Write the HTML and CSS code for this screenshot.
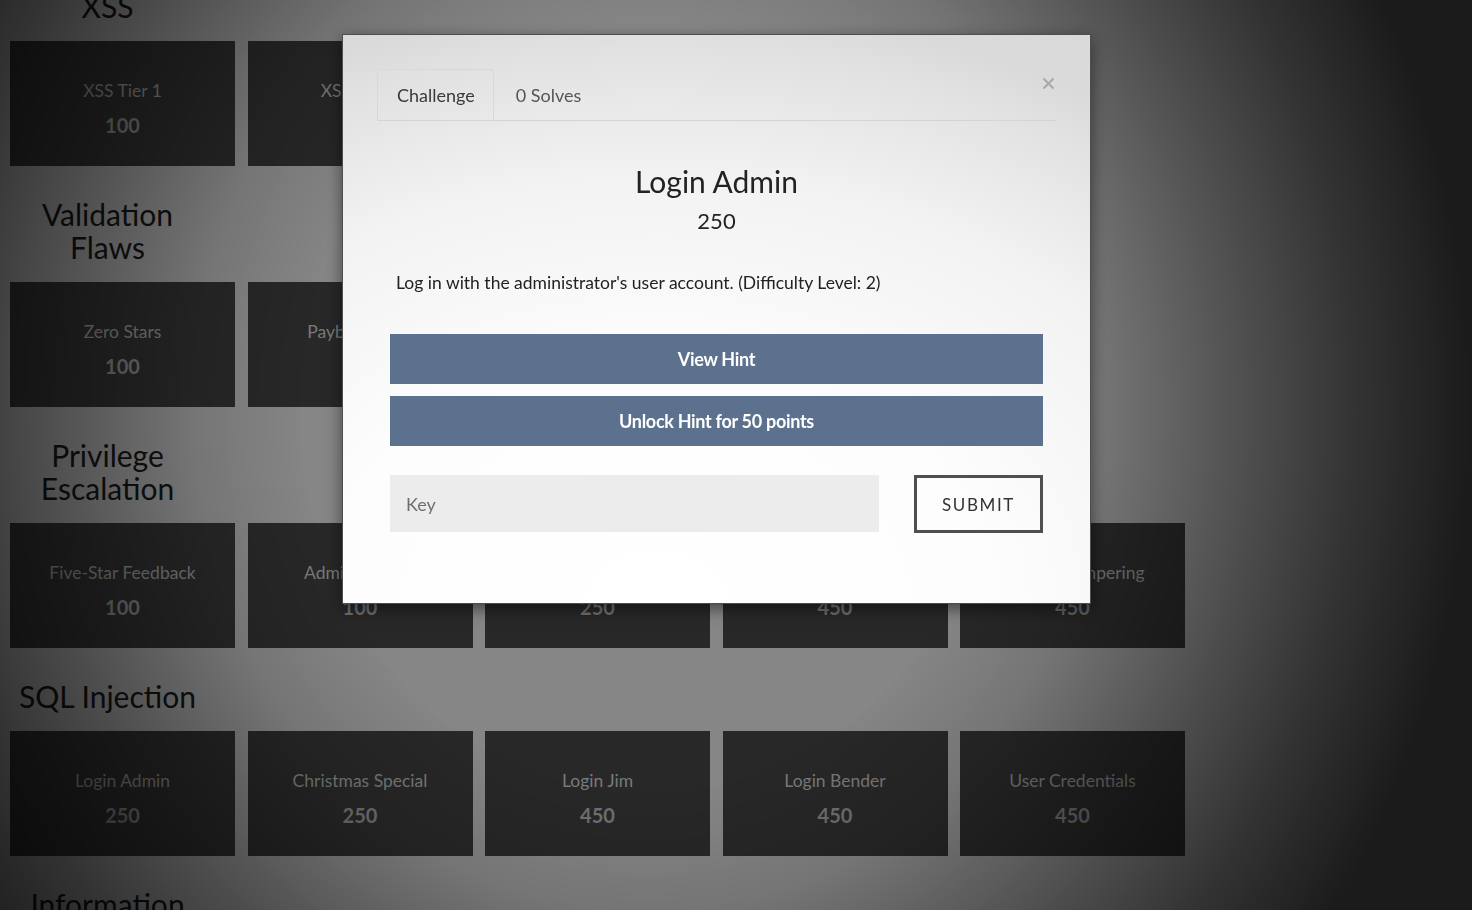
FILE: index.html
```html
<!DOCTYPE html>
<html lang="en">
<head>
<meta charset="utf-8">
<title>Challenges</title>
<link rel="stylesheet" href="styles.css">
</head>
<body>
<main class="board">
  <section class="category">
    <h2 class="cat-title">XSS</h2>
    <div class="tiles">
      <div class="tile"><span class="tile-name">XSS Tier 1</span><span class="tile-pts">100</span></div>
      <div class="tile"><span class="tile-name">XSS Tier 2</span><span class="tile-pts">250</span></div>
      <div class="tile"><span class="tile-name">XSS Tier 3</span><span class="tile-pts">450</span></div>
      <div class="tile"><span class="tile-name">XSS Tier 4</span><span class="tile-pts">450</span></div>
    </div>
  </section>
  <section class="category">
    <h2 class="cat-title">Validation Flaws</h2>
    <div class="tiles">
      <div class="tile"><span class="tile-name">Zero Stars</span><span class="tile-pts">100</span></div>
      <div class="tile"><span class="tile-name">Payback Time</span><span class="tile-pts">250</span></div>
      <div class="tile"><span class="tile-name">Upload Size</span><span class="tile-pts">250</span></div>
      <div class="tile"><span class="tile-name">Upload Type</span><span class="tile-pts">450</span></div>
    </div>
  </section>
  <section class="category">
    <h2 class="cat-title">Privilege Escalation</h2>
    <div class="tiles">
      <div class="tile"><span class="tile-name">Five-Star Feedback</span><span class="tile-pts">100</span></div>
      <div class="tile"><span class="tile-name">Admin Section</span><span class="tile-pts">100</span></div>
      <div class="tile"><span class="tile-name">Forged Feedback</span><span class="tile-pts">250</span></div>
      <div class="tile"><span class="tile-name">Basket Access</span><span class="tile-pts">450</span></div>
      <div class="tile"><span class="tile-name">Product Tampering</span><span class="tile-pts">450</span></div>
    </div>
  </section>
  <section class="category">
    <h2 class="cat-title">SQL Injection</h2>
    <div class="tiles">
      <div class="tile"><span class="tile-name">Login Admin</span><span class="tile-pts">250</span></div>
      <div class="tile"><span class="tile-name">Christmas Special</span><span class="tile-pts">250</span></div>
      <div class="tile"><span class="tile-name">Login Jim</span><span class="tile-pts">450</span></div>
      <div class="tile"><span class="tile-name">Login Bender</span><span class="tile-pts">450</span></div>
      <div class="tile"><span class="tile-name">User Credentials</span><span class="tile-pts">450</span></div>
    </div>
  </section>
  <section class="category">
    <h2 class="cat-title">Information</h2>
    <div class="tiles">
      <div class="tile"><span class="tile-name">Confidential Document</span><span class="tile-pts">100</span></div>
    </div>
  </section>
</main>

<div class="backdrop"></div>

<div class="modal" role="dialog">
  <div class="modal-body">
    <div class="tabs-row">
      <ul class="tabs">
        <li class="tab active">Challenge</li>
        <li class="tab">0 Solves</li>
      </ul>
      <button class="close" aria-label="Close">
        <svg width="13" height="13" viewBox="0 0 13 13"><path d="M1.5 1.5 L11.5 11.5 M11.5 1.5 L1.5 11.5" stroke="#a9a9a9" stroke-width="2" fill="none"/></svg>
      </button>
    </div>
    <div class="challenge">
      <h3 class="ch-name">Login Admin</h3>
      <div class="ch-value">250</div>
      <p class="ch-desc">Log in with the administrator's user account. (Difficulty Level: 2)</p>
      <div class="hint-btn">View Hint</div>
      <div class="hint-btn">Unlock Hint for 50 points</div>
      <form class="key-row">
        <input class="key-input" type="text" placeholder="Key">
        <button class="submit" type="button">SUBMIT</button>
      </form>
    </div>
  </div>
</div>
</body>
</html>
```

FILE: styles.css
```css
html, body {
  margin: 0;
  padding: 0;
  height: 100%;
  overflow: hidden;
}

body {
  background: #868686;
  font-family: Lato, "Noto Sans", sans-serif;
}

.board {
  margin-top: -42px;
}

.category {
  padding-top: 32px;
}

.cat-title {
  width: 195px;
  margin: 0 0 18px 10px;
  font-size: 30px;
  line-height: 33px;
  font-weight: 400;
  color: #121212;
  text-align: center;
}

.tiles {
  display: grid;
  grid-template-columns: repeat(5, 225px);
  column-gap: 12.5px;
  padding-left: 10px;
}

.tile {
  height: 125px;
  box-sizing: border-box;
  padding-top: 39px;
  background: #282828;
  display: flex;
  flex-direction: column;
  align-items: center;
}

.tile-name {
  font-size: 17.5px;
  line-height: 22px;
  color: #7a7a7a;
  margin-bottom: 11px;
}

.tile-pts {
  font-size: 20px;
  line-height: 24px;
  font-weight: 700;
  color: #707070;
}

.backdrop {
  position: fixed;
  inset: 0;
  z-index: 1;
  background: radial-gradient(ellipse 56% 100% at 44% 45%, rgba(0,0,0,0) 0%, rgba(0,0,0,0) 42%, rgba(0,0,0,0.12) 55%, rgba(0,0,0,0.4) 72%, rgba(0,0,0,0.62) 86%, rgba(0,0,0,0.8) 100%);
}

.modal {
  position: fixed;
  left: 342px;
  top: 34px;
  width: 749px;
  box-sizing: border-box;
  z-index: 2;
  border: 1px solid #4e4e4e;
  background: radial-gradient(ellipse 110% 105% at 42% 100%, #ffffff 0%, #fdfdfd 40%, #f2f2f2 72%, #e2e2e2 92%, #dadada 100%);
  box-shadow: 0 5px 15px rgba(0,0,0,0.5);
}

.modal-body {
  padding: 34px 34px 70px;
}

.tabs-row {
  display: flex;
  align-items: flex-start;
  border-bottom: 1px solid #d4d4d4;
}

.tabs {
  display: flex;
  list-style: none;
  margin: 0;
  padding: 0;
}

.tab {
  margin: 0 2px -1px 0;
  padding: 15px 18px 15px 19px;
  font-size: 18px;
  line-height: 20px;
  color: #555;
  border: 1px solid transparent;
  border-radius: 4px 4px 0 0;
}

.tab.active {
  color: #3a3a3a;
  border-color: #d8d8d8;
  border-bottom-color: transparent;
}

.close {
  margin: 8px 1px 0 auto;
  padding: 0;
  border: 0;
  background: none;
  width: 13px;
  height: 13px;
  display: flex;
}

.challenge {
  padding: 0 13px;
}

.ch-name {
  margin: 41px 0 0;
  font-size: 30px;
  line-height: 38px;
  font-weight: 400;
  color: #222;
  text-align: center;
}

.ch-value {
  margin-top: 8px;
  font-size: 22px;
  line-height: 26px;
  color: #222;
  text-align: center;
}

.ch-desc {
  margin: 39px 0 41px 6px;
  font-size: 17.5px;
  line-height: 20px;
  color: #222;
}

.hint-btn {
  height: 50px;
  margin-bottom: 12px;
  background: #5c718e;
  color: #fff;
  font-size: 18px;
  font-weight: 700;
  letter-spacing: -0.3px;
  display: flex;
  align-items: center;
  justify-content: center;
}

.key-row {
  display: flex;
  gap: 35px;
  margin: 29px 0 0;
}

.key-input {
  width: 489px;
  height: 57px;
  box-sizing: border-box;
  border: 0;
  background: #ececec;
  padding: 0 16px;
  font-family: Lato, "Noto Sans", sans-serif;
  font-size: 18px;
  color: #333;
  outline: none;
}

.key-input::placeholder {
  color: #707070;
}

.submit {
  width: 129px;
  height: 58px;
  box-sizing: border-box;
  border: 3px solid #4f4f4f;
  background: transparent;
  font-family: Lato, "Noto Sans", sans-serif;
  font-size: 17px;
  font-weight: 400;
  letter-spacing: 1.6px;
  color: #333;
}
```
